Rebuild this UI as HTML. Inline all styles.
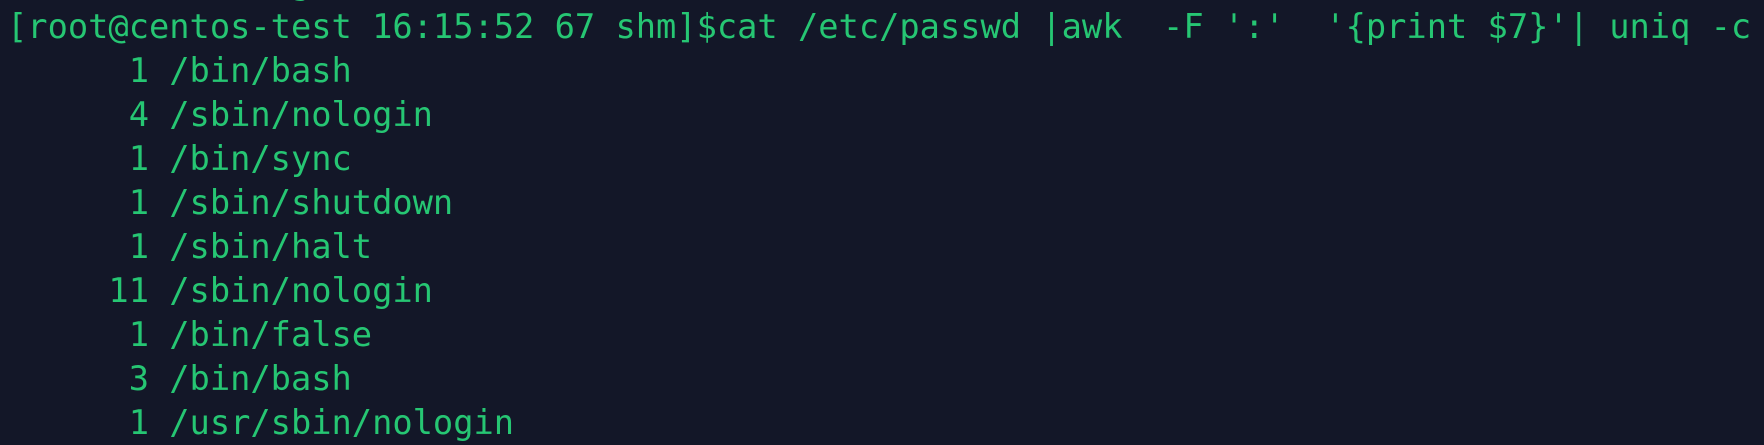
<!DOCTYPE html>
<html><head><meta charset="utf-8"><style>
html,body{margin:0;padding:0;background:#131728;}
body{width:1764px;height:442px;overflow:hidden;position:relative;}
pre{position:absolute;left:7px;top:5px;margin:0;font-family:"DejaVu Sans Mono","Liberation Mono",monospace;font-size:33.7px;line-height:44px;color:#26c673;white-space:pre;}
</style></head><body>
<pre style="top:-39px">              g</pre>
<pre>[root@centos-test 16:15:52 67 shm]$cat /etc/passwd |awk  -F ':'  '{print $7}'| uniq -c
      1 /bin/bash
      4 /sbin/nologin
      1 /bin/sync
      1 /sbin/shutdown
      1 /sbin/halt
     11 /sbin/nologin
      1 /bin/false
      3 /bin/bash
      1 /usr/sbin/nologin</pre>
</body></html>
